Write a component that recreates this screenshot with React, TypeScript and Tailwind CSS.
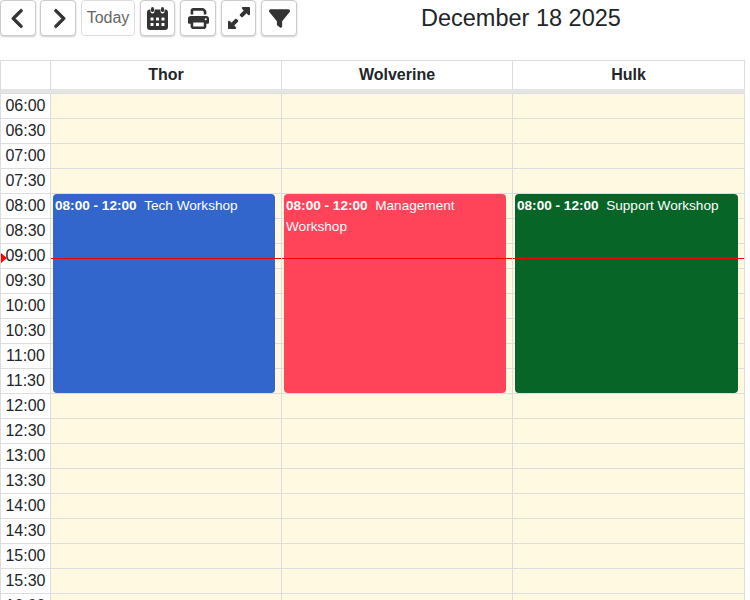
import { FaChevronLeft, FaChevronRight, FaPrint, FaUpRightAndDownLeftFromCenter, FaFilter } from "react-icons/fa6"
import type { ReactNode } from "react"

const slots = [
    "06:00", "06:30", "07:00", "07:30", "08:00", "08:30", "09:00", "09:30", "10:00", "10:30", "11:00", "11:30",
    "12:00", "12:30", "13:00", "13:30", "14:00", "14:30", "15:00", "15:30", "16:00",
]

const columns = [
    { name: "Thor", width: "w-[231px]", bg: "bg-[#3366cc]", eventWidth: "w-[222px]", title: "Tech Workshop" },
    { name: "Wolverine", width: "w-[231px]", bg: "bg-[#ff4359]", eventWidth: "w-[222px]", title: "Management Workshop" },
    { name: "Hulk", width: "w-[232px]", bg: "bg-[#076627]", eventWidth: "w-[223px]", title: "Support Workshop" },
]

function ToolButton({ children, className }: { children: ReactNode; className: string }) {
    return (
        <button className={`h-[36px] flex items-center justify-center rounded-[4px] border border-[#ccc] bg-white text-[#333] shadow-[0_1px_2px_rgba(0,0,0,0.2)] ${className}`}>
            {children}
        </button>
    )
}

function CalendarIcon() {
    return (
        <svg width="21" height="23" viewBox="0 0 21 23" fill="currentColor">
            <rect x="4" y="0" width="3" height="5" rx="1.5" />
            <rect x="14" y="0" width="3" height="5" rx="1.5" />
            <path d="M3 2.5h.5v2a2 2 0 0 0 4 0v-2h6v2a2 2 0 0 0 4 0v-2h.5a3 3 0 0 1 3 3V20a3 3 0 0 1-3 3H3a3 3 0 0 1-3-3V5.5a3 3 0 0 1 3-3z" />
            <g fill="#fff">
                <rect x="3.5" y="10.5" width="3" height="3" rx="0.5" />
                <rect x="9" y="10.5" width="3" height="3" rx="0.5" />
                <rect x="14.5" y="10.5" width="3" height="3" rx="0.5" />
                <rect x="3.5" y="16" width="3" height="3" rx="0.5" />
                <rect x="9" y="16" width="3" height="3" rx="0.5" />
                <rect x="14.5" y="16" width="3" height="3" rx="0.5" />
            </g>
        </svg>
    )
}

export default function App() {
    return (
        <div className="w-[750px] h-[600px] overflow-hidden bg-white font-['Liberation_Sans',sans-serif] text-[#212529]">
            <div className="flex items-start h-[60px]">
                <ToolButton className="w-[36px] ml-0"><FaChevronLeft size={21} stroke="currentColor" strokeWidth={24} /></ToolButton>
                <ToolButton className="w-[36px] ml-[4px]"><FaChevronRight size={21} stroke="currentColor" strokeWidth={24} /></ToolButton>
                <ToolButton className="w-[54px] ml-[5px] border-[#ddd] text-[16px] text-[#666] shadow-none">Today</ToolButton>
                <ToolButton className="w-[35px] ml-[5px]"><CalendarIcon /></ToolButton>
                <ToolButton className="w-[36px] ml-[5px]"><FaPrint size={21} /></ToolButton>
                <ToolButton className="w-[35px] ml-[5px]"><FaUpRightAndDownLeftFromCenter size={22} /></ToolButton>
                <ToolButton className="w-[36px] ml-[5px]"><FaFilter size={21} /></ToolButton>
                <div className="ml-[124px] text-[23.5px] leading-[36px]">December 18 2025</div>
            </div>

            <div className="w-[745px] border-t border-l border-[#ddd]">
                <div className="h-[33px] border-b border-[#ddd]">
                    <div className="flex h-[32px] border-b-[4px] border-[#e4e4e4]">
                        <div className="w-[50px] border-r border-[#ddd]" />
                        {columns.map((col) => (
                            <div key={col.name} className={`${col.width} border-r border-[#ddd] flex items-center justify-center font-bold text-[16px]`}>
                                {col.name}
                            </div>
                        ))}
                    </div>
                </div>

                <div className="flex relative">
                    <div className="w-[50px]">
                        {slots.map((slot) => (
                            <div key={slot} className="h-[25px] box-border border-b border-r border-[#ddd] flex items-center justify-center text-[16px] bg-white">
                                {slot}
                            </div>
                        ))}
                    </div>

                    {columns.map((col) => (
                        <div key={col.name} className={`${col.width} relative bg-[#fff9e2]`}>
                            {slots.map((slot) => (
                                <div key={slot} className="h-[25px] box-border border-b border-r border-[#ddd]" />
                            ))}
                            <div className={`absolute left-[2px] top-[100px] h-[199px] ${col.eventWidth} rounded-[4px] ${col.bg} text-white text-[13.6px] leading-[21px] px-[2px] pt-[1px]`}>
                                <b>08:00 - 12:00</b>&nbsp;&nbsp;{col.title}
                            </div>
                            <div className="absolute left-0 right-[1px] top-[164px] h-px bg-[#ee0000]" />
                        </div>
                    ))}

                    <div className="absolute left-0 top-[159px] w-0 h-0 border-y-[5px] border-y-transparent border-l-[6px] border-l-[#ff0000]" />
                </div>
            </div>
        </div>
    )
}
